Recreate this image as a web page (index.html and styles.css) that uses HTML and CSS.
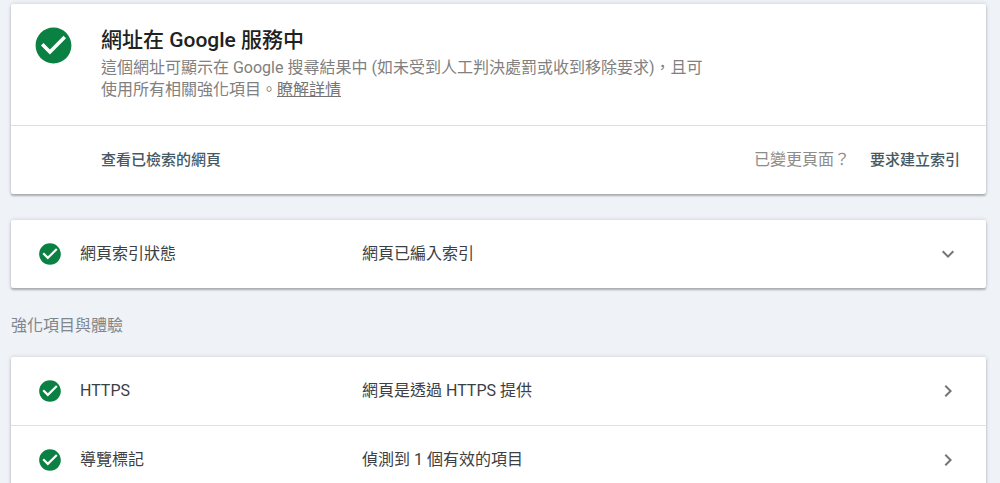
FILE: index.html
```html
<!DOCTYPE html>
<html lang="zh-Hant">
<head>
    <meta charset="UTF-8">
    <meta name="viewport" content="width=device-width, initial-scale=1.0">
    <title>網址審查</title>
    <link rel="stylesheet" href="styles.css">
</head>
<body>
    <!-- Shared icons -->
    <svg class="sprite" aria-hidden="true">
        <symbol id="check" viewBox="0 0 24 24">
            <path d="M12 2C6.48 2 2 6.48 2 12s4.48 10 10 10 10-4.48 10-10S17.52 2 12 2zm-2 15l-5-5 1.41-1.41L10 14.17l7.59-7.59L19 8l-9 9z"/>
        </symbol>
        <symbol id="chevron-down" viewBox="0 0 24 24">
            <path d="M7.41 8.59L12 13.17l4.59-4.58L18 10l-6 6-6-6z"/>
        </symbol>
        <symbol id="chevron-right" viewBox="0 0 24 24">
            <path d="M10 6L8.59 7.41 13.17 12l-4.58 4.59L10 18l6-6z"/>
        </symbol>
    </svg>

    <main>
        <section class="card">
            <div class="summary">
                <svg class="check check-large" aria-hidden="true"><use href="#check"/></svg>
                <div class="summary-text">
                    <h1>網址在 Google 服務中</h1>
                    <p>這個網址可顯示在 Google 搜尋結果中 (如未受到人工判決處罰或收到移除要求)，且可使用所有相關強化項目。<a href="#">瞭解詳情</a></p>
                </div>
            </div>
            <div class="actions">
                <button type="button" class="action">查看已檢索的網頁</button>
                <span class="changed">已變更頁面？</span>
                <button type="button" class="action">要求建立索引</button>
            </div>
        </section>

        <section class="card">
            <button type="button" class="row" aria-expanded="false">
                <svg class="check" aria-hidden="true"><use href="#check"/></svg>
                <span class="name">網頁索引狀態</span>
                <span class="status">網頁已編入索引</span>
                <svg class="chevron" aria-hidden="true"><use href="#chevron-down"/></svg>
            </button>
        </section>

        <h2>強化項目與體驗</h2>

        <section class="card">
            <button type="button" class="row">
                <svg class="check" aria-hidden="true"><use href="#check"/></svg>
                <span class="name">HTTPS</span>
                <span class="status">網頁是透過 HTTPS 提供</span>
                <svg class="chevron" aria-hidden="true"><use href="#chevron-right"/></svg>
            </button>
            <button type="button" class="row">
                <svg class="check" aria-hidden="true"><use href="#check"/></svg>
                <span class="name">導覽標記</span>
                <span class="status">偵測到 1 個有效的項目</span>
                <svg class="chevron" aria-hidden="true"><use href="#chevron-right"/></svg>
            </button>
        </section>
    </main>
</body>
</html>
```
FILE: styles.css
```css
* {
    margin: 0;
    padding: 0;
    box-sizing: border-box;
}

body {
    height: 100vh;
    overflow: hidden;
    background: #eff2f7;
    color: #3c4043;
    font-family: Roboto, "Noto Sans CJK TC", sans-serif;
    font-size: 16px;
    line-height: 22px;
}

main {
    padding: 4px 14px 24px 11px;
}

button {
    border: 0;
    background: none;
    font: inherit;
    color: inherit;
    cursor: pointer;
}

.sprite {
    display: none;
}

.card {
    margin-bottom: 26px;
    background: #fff;
    border-radius: 2px;
    box-shadow: 0 2px 2px rgba(0, 0, 0, 0.24), 0 0 4px rgba(0, 0, 0, 0.16);
}

/* Summary card */
.summary {
    display: flex;
    gap: 26px;
    padding: 20px 21px 24px;
    border-bottom: 1px solid #e0e0e0;
}

.summary-text {
    max-width: 616px;
}

.summary h1 {
    font-size: 21px;
    font-weight: 500;
    line-height: 32px;
    padding-bottom: 1px;
    color: #212121;
}

.summary p {
    color: #808080;
}

.summary a {
    color: #757575;
}

.actions {
    display: flex;
    align-items: center;
    gap: 20px;
    height: 68px;
    padding: 0 26px 0 90px;
}

.action {
    font-size: 15px;
    font-weight: 500;
    color: #455a64;
}

.changed {
    margin-left: auto;
    color: #8c8c8c;
}

/* Icons */
.check {
    flex: none;
    width: 26px;
    height: 26px;
    fill: #0b8043;
}

.check-large {
    width: 43px;
    height: 43px;
}

.chevron {
    flex: none;
    width: 24px;
    height: 24px;
    fill: #757575;
}

/* Detail rows */
.row {
    display: grid;
    grid-template-columns: 26px 265px 1fr 24px;
    column-gap: 17px;
    align-items: center;
    width: 100%;
    height: 68px;
    padding: 0 26px;
    text-align: left;
}

.row + .row {
    height: 69px;
    border-top: 1px solid #e0e0e0;
}

h2 {
    margin-bottom: 20px;
    padding-top: 1px;
    font-size: 16px;
    font-weight: 400;
    color: #80868b;
}
```
